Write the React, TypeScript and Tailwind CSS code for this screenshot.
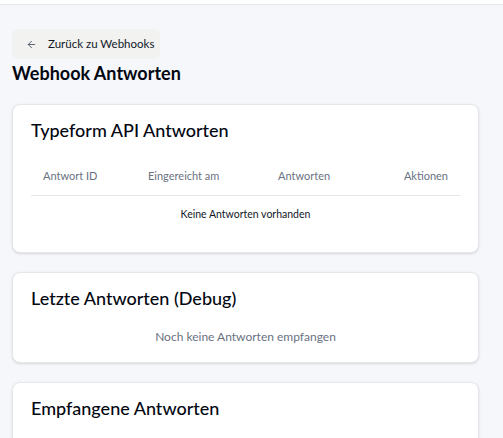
import React from "react";

const font = { fontFamily: 'Lato, "Noto Sans", sans-serif' };

const ArrowLeft: React.FC = () => (
  <svg width="11" height="11" viewBox="0 0 24 24" fill="none" stroke="currentColor" strokeWidth="2" strokeLinecap="round" strokeLinejoin="round">
    <path d="M19 12H5" />
    <path d="M12 19l-7-7 7-7" />
  </svg>
);

const Card: React.FC<{ title: string; children?: React.ReactNode }> = ({ title, children }) => (
  <section className="rounded-lg border border-gray-200 bg-white shadow-sm px-[18px] pt-[11px] pb-4">
    <h2 className="text-[18px] leading-[28px] font-medium text-gray-950">{title}</h2>
    {children}
  </section>
);

const App: React.FC = () => {
  const columns = ["Antwort ID", "Eingereicht am", "Antworten", "Aktionen"];

  return (
    <div className="min-h-screen bg-[#f6f7fa]" style={font}>
      <div className="h-[5px] bg-white border-b border-gray-200" />
      <div className="w-[467px] ml-3 pt-6 pb-10">
        <button className="flex items-center whitespace-nowrap h-[30px] w-[148px] rounded-md bg-[#f2f2f0] pl-[14px] text-[11.5px] text-gray-900">
          <span className="text-gray-600">
            <ArrowLeft />
          </span>
          <span className="ml-[11px]">Zurück zu Webhooks</span>
        </button>
        <h1 className="mt-[2px] text-[18px] leading-[24px] font-bold text-gray-950">Webhook Antworten</h1>

        <div className="mt-[19px] flex flex-col gap-[19px]">
          <Card title="Typeform API Antworten">
            <div className="mt-[13px] mb-[2px]">
              <div className="grid grid-cols-[105px_130px_1fr_auto] h-[39px] items-center px-3 border-b border-gray-200 text-[11px] text-gray-500">
                {columns.map((c) => (
                  <span key={c}>{c}</span>
                ))}
              </div>
              <div className="h-[38px] flex items-center justify-center text-[10.5px] text-gray-900">
                Keine Antworten vorhanden
              </div>
            </div>
          </Card>

          <Card title="Letzte Antworten (Debug)">
            <p className="mt-4 text-center text-[12px] leading-[18px] text-gray-500">Noch keine Antworten empfangen</p>
          </Card>

          <Card title="Empfangene Antworten">
            <div className="h-[60px]" />
          </Card>
        </div>
      </div>
    </div>
  );
};

export default App;
